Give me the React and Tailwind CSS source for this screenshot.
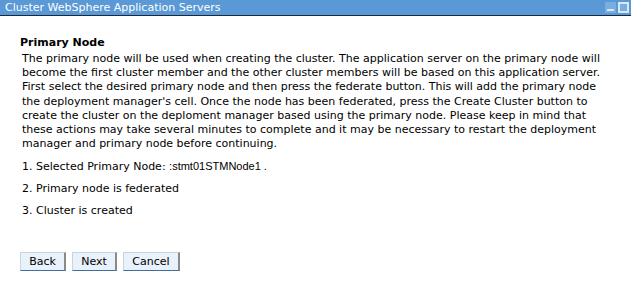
const lines = [
  "The primary node will be used when creating the cluster. The application server on the primary node will",
  "become the first cluster member and the other cluster members will be based on this application server.",
  "First select the desired primary node and then press the federate button. This will add the primary node",
  "the deployment manager's cell. Once the node has been federated, press the Create Cluster button to",
  "create the cluster on the deploment manager based using the primary node. Please keep in mind that",
  "these actions may take several minutes to complete and it may be necessary to restart the deployment",
  "manager and primary node before continuing.",
];

const buttons = [
  { label: "Back", width: "w-[46px]" },
  { label: "Next", width: "w-[45px]" },
  { label: "Cancel", width: "w-[57px]" },
];

export default function App() {
  return (
    <div className="w-[631px] h-[293px] bg-white font-['DejaVu_Sans',Verdana,sans-serif] text-[11px] text-black overflow-hidden">
      {/* Title bar */}
      <div className="h-[16px] flex items-center justify-between bg-[#5a99d6] border-b border-[#1b2a3a] pl-[5px] pr-[2px]">
        <span className="text-white text-[11px] leading-none">Cluster WebSphere Application Servers</span>
        <div className="flex items-center gap-[2px]">
          <div className="w-[11px] h-[11px] bg-[#7aaee0] flex items-end justify-center pb-[2px]">
            <div className="w-[7px] h-[2px] bg-[#d9e8f7]" />
          </div>
          <div className="w-[11px] h-[11px] bg-[#7aaee0] border-2 border-[#d9e8f7]" />
        </div>
      </div>

      <div className="pl-[20px] pr-[20px] pt-[20px]">
        <h1 className="font-bold text-[11px] leading-[14px] mb-[2px]">Primary Node</h1>
        <p className="pl-[2px] leading-[14.2px]">
          {lines.map((line) => (
            <span key={line} className="block whitespace-nowrap">
              {line}
            </span>
          ))}
        </p>

        <div className="pl-[2px] mt-[8px] flex flex-col gap-[8px] leading-[14px]">
          <div>
            1. Selected Primary Node:{" "}
            <span className="font-['Liberation_Sans',Arial,sans-serif] text-[11px]">:stmt01STMNode1 .</span>
          </div>
          <div>2. Primary node is federated</div>
          <div>3. Cluster is created</div>
        </div>

        <div className="flex gap-[6px] mt-[34px]">
          {buttons.map((b) => (
            <button
              key={b.label}
              className={`${b.width} h-[19px] flex items-center justify-center bg-[#e9f1fb] border-l border-t border-[#c8d3e0] border-r-2 border-r-[#8a8a8a] border-b border-b-[#3f6f9f] text-[11px] leading-none text-black`}
            >
              {b.label}
            </button>
          ))}
        </div>
      </div>
    </div>
  );
}
